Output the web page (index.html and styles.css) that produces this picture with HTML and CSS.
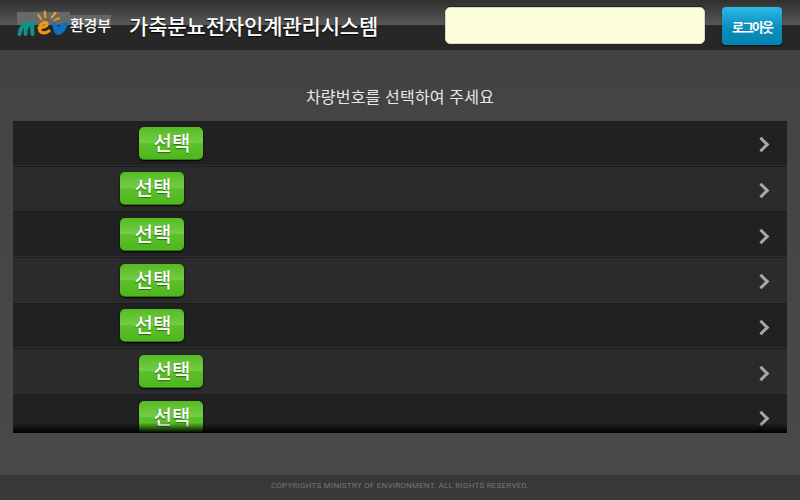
FILE: index.html
```html
<!DOCTYPE html>
<html lang="ko">
<head>
<meta charset="utf-8">
<title>가축분뇨전자인계관리시스템</title>
<link rel="stylesheet" href="styles.css">
</head>
<body>
<div class="app">
  <header class="header">
    <div class="brand">
      <div class="logo">
        <svg class="logo-mark" width="53" height="26" viewBox="0 0 53 26">
          <rect x="0" y="2" width="53" height="13" fill="#686868"/>
          <path d="M2.500 24 C3.500 18 6 14.500 9.500 13.500 C9 17 8.500 20 8.500 24 M9 19 C10 16 12.500 14 15.500 13.500 C15 17 15 20 15.500 24" fill="none" stroke="#0f9488" stroke-width="4" stroke-linecap="round"/>
          <path d="M22 18 C26 18 31 16 30 13.500 C28.500 11 23 13.500 22.500 18.500 C22.500 23 27 24.500 32 21" fill="none" stroke="#ef9a12" stroke-width="3.200" stroke-linecap="round"/>
          <path d="M35 13 C38 11.500 40 13 41.500 17 C43.500 13.500 47 11.500 51 12 C50.500 18 46 25 41 25 C37.500 25 36 19 35 13 Z" fill="#0f6fc0"/>
          <path d="M26.500 1 L28.500 0.500 L29.500 8 L27.500 8 Z M20 5 L21.500 3.500 L25.500 9.500 L24 10.500 Z M38 1.500 L40 3 L35 8.500 L33.500 7.500 Z M42 7 L43 9 L36.500 11 L36 10 Z" fill="#f0a018"/>
        </svg>
        <span class="logo-name">환경부</span>
      </div>
      <h1 class="title">가축분뇨전자인계관리시스템</h1>
    </div>
    <div class="header-side">
      <div class="user-box"></div>
      <button class="logout">로그아웃</button>
    </div>
  </header>
  <main class="main">
    <p class="prompt">차량번호를 선택하여 주세요</p>
    <div class="list">
      <div class="row row-odd"><a class="pick pick-far">선택</a><span class="chev"></span></div>
      <div class="row row-even"><a class="pick">선택</a><span class="chev"></span></div>
      <div class="row row-odd"><a class="pick">선택</a><span class="chev"></span></div>
      <div class="row row-even"><a class="pick">선택</a><span class="chev"></span></div>
      <div class="row row-odd"><a class="pick">선택</a><span class="chev"></span></div>
      <div class="row row-even"><a class="pick pick-far">선택</a><span class="chev"></span></div>
      <div class="row row-odd"><a class="pick pick-far">선택</a><span class="chev"></span></div>
      <div class="list-fade"></div>
    </div>
  </main>
  <footer class="footer">COPYRIGHTS MINISTRY OF ENVIRONMENT. ALL RIGHTS RESERVED.</footer>
</div>
</body>
</html>
```
FILE: styles.css
```css
* { box-sizing: border-box; }
html, body { margin: 0; height: 100%; }
body { font-family: "Noto Sans CJK KR", "Roboto", sans-serif; background: #444; overflow: hidden; }
.app { width: 800px; height: 500px; display: flex; flex-direction: column; }

.header {
  height: 50px; flex: none; display: flex; justify-content: space-between; align-items: center;
  padding: 0 18px 0 17px;
  background: linear-gradient(#303030 0, #585858 25px, #272727 25px, #272727 100%);
}
.brand { display: flex; align-items: center; }
.logo { display: flex; align-items: center; width: 111px; }
.logo-mark { display: block; flex: none; margin-bottom: 4px; }
.logo-name { font-size: 15px; font-weight: 500; color: #fff; line-height: 20px; letter-spacing: -0.2px; background: linear-gradient(#666 0, #666 50%, transparent 50%); }
.title { margin: 0 0 0 1px; font-size: 21px; font-weight: 500; line-height: 28px; color: #fff; letter-spacing: -0.15px; text-shadow: 0 1px 1px #000; white-space: nowrap; }

.header-side { display: flex; align-items: center; gap: 17px; }
.user-box {
  width: 260px; height: 37px; background: #fdffdc; border-radius: 5px;
  border: 1px solid #d8d8c0; box-shadow: 0 -1px 1px #222;
}
.logout {
  width: 60px; height: 38px; margin-top: 2px; padding: 0; border: 0; border-radius: 4px;
  background: linear-gradient(#2dbbe8, #0a8db9 55%, #0285b3); color: #fff;
  font: 700 13px "Noto Sans CJK KR", sans-serif; letter-spacing: -2px; box-shadow: 0 1px 1px #111;
}

.main { flex: 1; padding: 0 13px; background: linear-gradient(#434343, #494949); display: flex; flex-direction: column; }
.prompt { margin: 0; height: 71px; padding-top: 34px; text-align: center; font-size: 16px; line-height: 24px; color: #e8e8e8; letter-spacing: 0.18px; }
.list { position: relative; height: 312px; overflow: hidden; background: #222; }
.row { height: 45.67px; display: flex; align-items: center; padding: 0 20px 0 107px; border-bottom: 1px solid #1c1c1c; box-shadow: inset 0 -1px 0 #2e2e2e; }
.row-odd { background: #212121; }
.row-even { background: #2b2b2b; }
.pick {
  width: 64px; height: 33px; display: flex; align-items: center; justify-content: center;
  padding-left: 2px; border-radius: 5px; color: #fff; font-size: 20px; font-weight: 500; line-height: 1;
  background: linear-gradient(#54bb22 0, #74cc48 48%, #5bc12a 52%, #4fb71e 100%);
  border-bottom: 1px solid #2f7a12;
  box-shadow: 0 1px 2px #000; text-shadow: 0 1px 1px #2a6a10;
}
.pick-far { margin-left: 19px; }
.chev { margin-left: auto; margin-top: 3px; width: 11px; height: 11px; border-top: 3px solid #a8a8a8; border-right: 3px solid #a8a8a8; transform: rotate(45deg); }
.list-fade { position: absolute; left: 0; right: 0; bottom: 0; height: 10px; background: linear-gradient(rgba(0,0,0,0), #000); }

.footer { height: 25px; flex: none; background: #383838; text-align: center; font: 8px/22px "Roboto", sans-serif; color: #777; letter-spacing: 0.24px; }
```
